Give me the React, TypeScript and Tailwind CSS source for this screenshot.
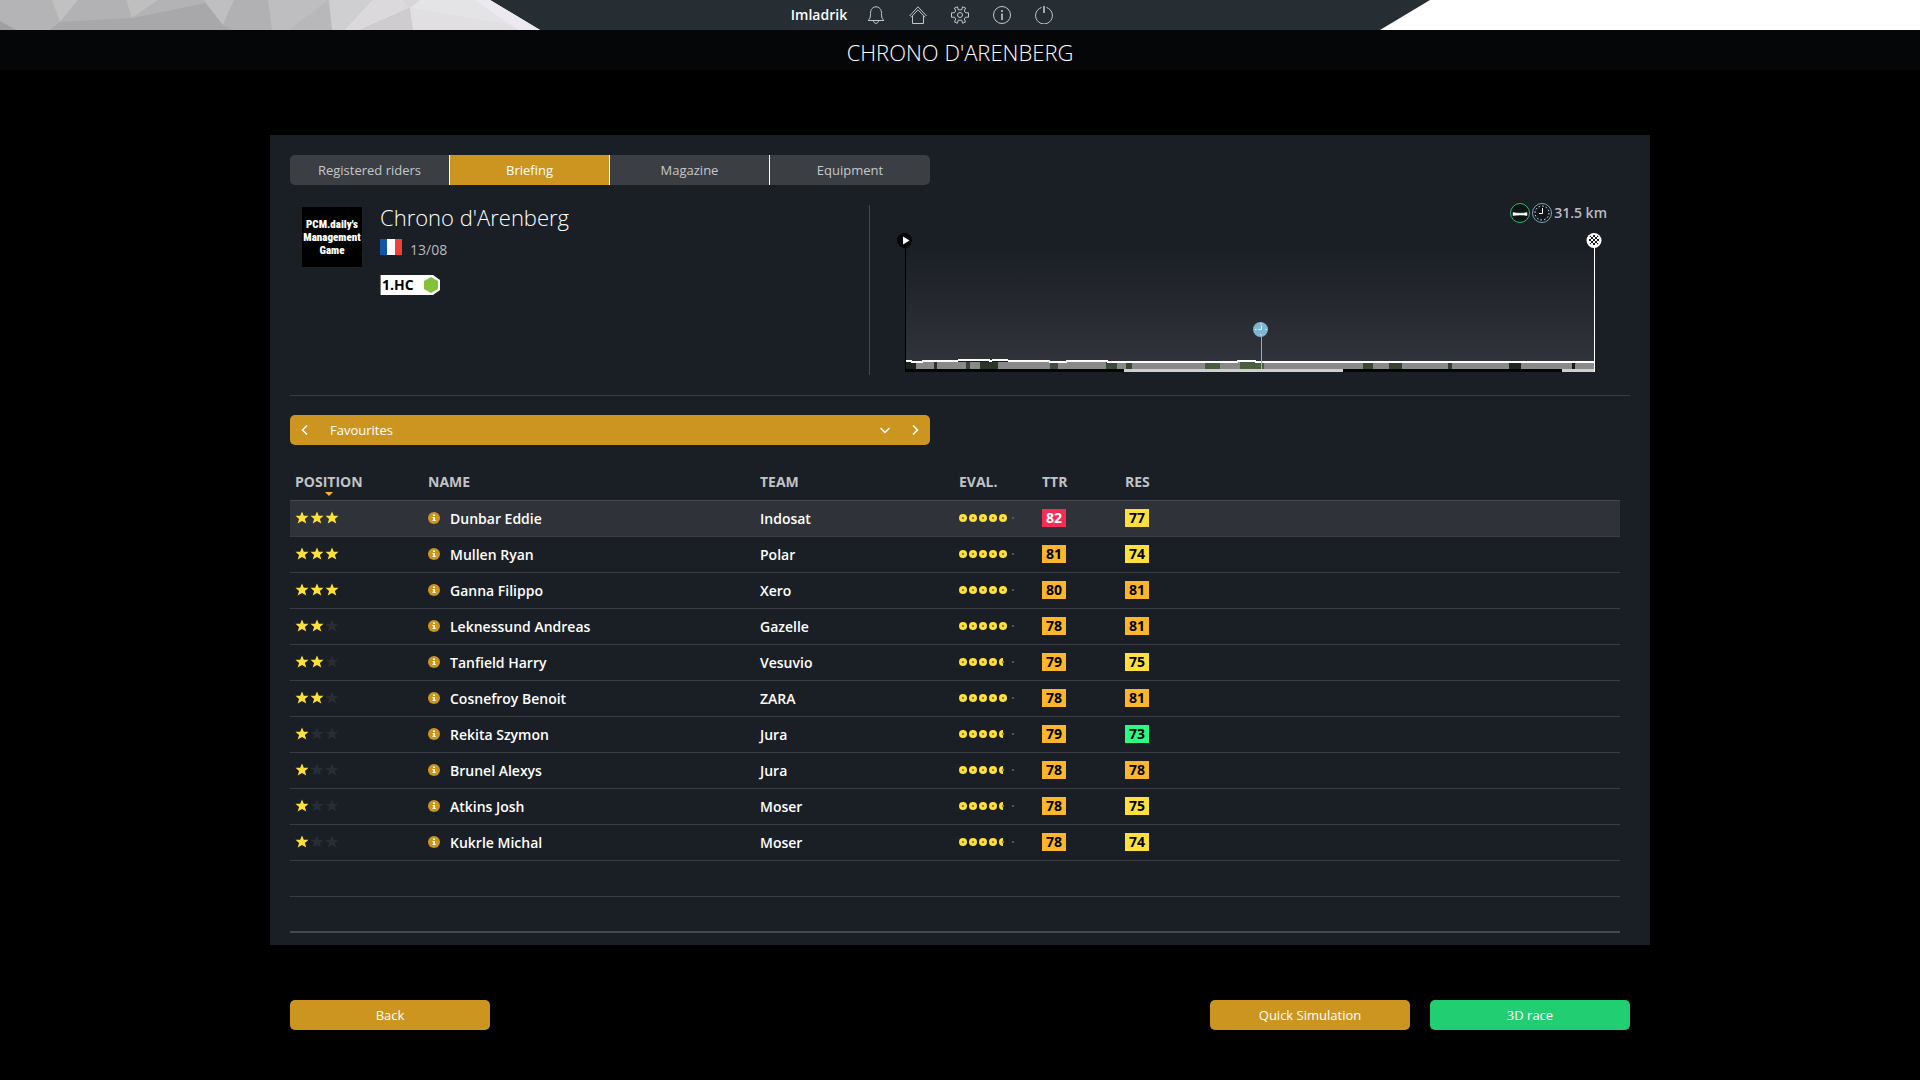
import type { ReactNode } from "react"

const TABS = ["Registered riders", "Briefing", "Magazine", "Equipment"]

const RIDERS = [
  { name: "Dunbar Eddie", team: "Indosat", stars: 3, rating: 5, ttr: 82, res: 77 },
  { name: "Mullen Ryan", team: "Polar", stars: 3, rating: 5, ttr: 81, res: 74 },
  { name: "Ganna Filippo", team: "Xero", stars: 3, rating: 5, ttr: 80, res: 81 },
  { name: "Leknessund Andreas", team: "Gazelle", stars: 2, rating: 5, ttr: 78, res: 81 },
  { name: "Tanfield Harry", team: "Vesuvio", stars: 2, rating: 4.5, ttr: 79, res: 75 },
  { name: "Cosnefroy Benoit", team: "ZARA", stars: 2, rating: 5, ttr: 78, res: 81 },
  { name: "Rekita Szymon", team: "Jura", stars: 1, rating: 4.5, ttr: 79, res: 73 },
  { name: "Brunel Alexys", team: "Jura", stars: 1, rating: 4.5, ttr: 78, res: 78 },
  { name: "Atkins Josh", team: "Moser", stars: 1, rating: 4.5, ttr: 78, res: 75 },
  { name: "Kukrle Michal", team: "Moser", stars: 1, rating: 4.5, ttr: 78, res: 74 },
]

// x, width, colour of each wooded stretch
const WOODS: [number, number, string][] = [
  [9, 10, "#1c221c"], [37, 3, "#2a302a"], [69, 4, "#364233"], [83, 18, "#2c352a"],
  [153, 8, "#414b3d"], [209, 11, "#3c4a38"], [229, 6, "#3a4735"], [308, 15, "#485c40"],
  [343, 24, "#4a5f41"], [466, 10, "#3a4735"], [492, 13, "#37432f"], [551, 4, "#343e30"],
  [612, 12, "#20261f"], [675, 3, "#161a16"],
]

function scoreColor(v: number) {
  if (v >= 82) return "bg-[#f72c55] text-white"
  if (v >= 78) return "bg-[#fdb52b] text-black"
  if (v >= 74) return "bg-[#fde03c] text-black"
  return "bg-[#2bfa85] text-black"
}

function Score({ value }: { value: number }) {
  return (
    <span className={`flex h-[18px] w-6 items-center justify-center text-sm font-bold ${scoreColor(value)}`}>
      {value}
    </span>
  )
}

function Stars({ count }: { count: number }) {
  return (
    <svg width="45" height="14" viewBox="0 0 45 14" className="block">
      {[0, 1, 2].map((i) => (
        <path
          key={i}
          transform={`translate(${i * 15} 0)`}
          d="M7 0.5 8.8 4.8H13.5L9.9 7.9 11.3 12.6 7 9.9 2.700 12.6 4.1 7.9 0.5 4.8H5.2Z"
          fill={i < count ? "#fde03c" : "#282c33"}
        />
      ))}
    </svg>
  )
}

function Rating({ value }: { value: number }) {
  return (
    <svg width="56" height="8" viewBox="0 0 56 8" className="block">
      {[0, 1, 2, 3, 4].map((i) => {
        const cx = 4 + i * 10
        return (
          <g key={i}>
            {value >= i + 1 ? (
              <circle cx={cx} cy="4" r="4" fill="#fde03c" />
            ) : (
              <path d={`M${cx} 0A4 4 0 0 0 ${cx} 8Z`} fill="#fde03c" />
            )}
            <circle cx={cx} cy="4" r="1.2" fill="#9c8526" />
          </g>
        )
      })}
      <rect x="53" y="3" width="2" height="2" fill="#5a5b3c" />
    </svg>
  )
}

function InfoDot() {
  return (
    <svg width="12" height="12" viewBox="0 0 12 12" className="block">
      <circle cx="6" cy="6" r="6" fill="#cb951f" />
      <path d="M5 2.5H7V4H5ZM4.5 5H7V8H7.8V9H4.5V8H5.3V6H4.5Z" fill="#fff" />
    </svg>
  )
}

function NavIcon({ label, children }: { label: string; children: ReactNode }) {
  return (
    <button aria-label={label} className="text-[#c3c8cc]">
      <svg width="18" height="18" viewBox="0 0 18 18" fill="none" stroke="currentColor" className="block">
        {children}
      </svg>
    </button>
  )
}

function Chevron({ d }: { d: string }) {
  return (
    <svg width="10" height="10" viewBox="0 0 10 10" fill="none" stroke="#fff" strokeWidth="1.5" className="block">
      <path d={d} />
    </svg>
  )
}

function TopBar() {
  return (
    <header className="flex h-[30px] justify-between bg-[#262d33]">
      <svg width="540" height="30" viewBox="0 0 540 30" className="shrink-0">
        <path d="M0 0H490L540 30H0Z" fill="#b4b3b5" />
        <path d="M52 0H78L60 22Z" fill="#c2c1c2" />
        <path d="M126 0H158L132 18Z" fill="#c0bfc0" />
        <path d="M78 0H126L132 18 60 22Z" fill="#b2b1b3" />
        <path d="M50 30 60 22 132 18 205 3 223 25 233 30Z" fill="#a8a7a9" />
        <path d="M158 0H204L205 3 132 18Z" fill="#b3b2b4" />
        <path d="M0 21 16 30H0Z" fill="#9f9ea0" />
        <path d="M204 0H234L223 25Z" fill="#bfbec0" />
        <path d="M234 0H268L272 30H233L223 25Z" fill="#b1b0b2" />
        <path d="M268 0H329L332 30H272Z" fill="#bebdbf" />
        <path d="M328 0 332 30H289Z" fill="#b8b7b9" />
        <path d="M329 0H372L344 30H332Z" fill="#cfced0" />
        <path d="M372 0H403L410 8 360 30H344Z" fill="#dbd9dc" />
        <path d="M410 8 413 30H360Z" fill="#cecccf" />
        <path d="M403 0H490L540 30H413L410 8Z" fill="#e4e3e5" />
        <path d="M410 8 540 30H413Z" fill="#e1dfe2" />
        <path d="M475 0H490L540 30H518Z" fill="#eceaf0" />
        <path d="M403 0H420L410 8Z" fill="#d6d5d7" />
      </svg>
      <nav className="flex items-center gap-6 pr-[76px]">
        <span className="-mr-1 text-sm font-semibold text-white">Imladrik</span>
        <NavIcon label="Notifications">
          <path d="M1 14.5C3.2 13 3.5 11 3.5 7.500 3.5 3 6 0.8 9 0.8S14.5 3 14.5 7.5C14.5 11 14.8 13 17 14.5ZM6.500 14.8C6.800 18.200 11.200 18.200 11.500 14.8" />
        </NavIcon>
        <NavIcon label="Home">
          <path d="M0.500 10 9 0.8 17.500 10M2 11.300 9 3.800 16 11.300M3.500 10V17.500H14.500V10" />
        </NavIcon>
        <NavIcon label="Settings">
          <path d="M7.200 3.800 6.500 0.8 3.500 2 4.700 5 3.400 6.800H0.5V11.200H3.400L4.700 13 3.500 16 6.500 17.200 7.200 14.200H10.800L11.500 17.200 14.500 16 13.300 13 14.600 11.200H17.500V6.800H14.600L13.300 5 14.500 2 11.500 0.8 10.800 3.800Z" strokeLinejoin="round" />
          <circle cx="9" cy="9" r="2.5" />
        </NavIcon>
        <NavIcon label="Information">
          <circle cx="9" cy="9" r="8.5" />
          <path d="M9 7.5V14M9 4V6" strokeWidth="1.6" />
        </NavIcon>
        <NavIcon label="Quit">
          <path d="M6.5 1.5A8.4 8.4 0 1 0 11.5 1.5" />
          <path d="M9 0V7" strokeWidth="1.6" />
        </NavIcon>
      </nav>
      <svg width="540" height="30" viewBox="0 0 540 30" className="shrink-0">
        <path d="M50 0H540V30H0Z" fill="#fff" />
      </svg>
    </header>
  )
}

function StageProfile() {
  return (
    <svg viewBox="0 0 706 144" className="block w-full">
      <defs>
        <linearGradient id="sky" x1="0" y1="0" x2="0" y2="1">
          <stop offset="0" stopColor="#1a1e25" />
          <stop offset="1" stopColor="#303339" />
        </linearGradient>
        <clipPath id="flag">
          <circle cx="697" cy="9" r="5.5" />
        </clipPath>
      </defs>
      <rect x="9" y="16" width="689" height="114" fill="url(#sky)" />
      <rect x="9" y="131" width="689" height="7" fill="#89898a" />
      {WOODS.map(([x, w, color]) => (
        <rect key={x} x={x} y="131" width={w} height="7" fill={color} />
      ))}
      <path
        d="M9 130H14L15 131H25L26 130H55L67 129H92L93 130 97 129H106L116 130H152L153 131H169L170 130H210L211 131H340L341 130H358L359 131H698"
        fill="none"
        stroke="#fff"
        strokeWidth="2"
        shapeRendering="crispEdges"
      />

      {/* distance bar */}
      <rect x="8" y="138" width="690" height="3" fill="#050608" />
      <rect x="227" y="138" width="219" height="3" fill="#cfcfd0" />
      <rect x="665" y="138" width="33" height="3" fill="#cfcfd0" />

      {/* start */}
      <rect x="8" y="14" width="1" height="127" fill="#000" />
      <circle cx="7.5" cy="9.5" r="7.5" fill="#050608" />
      <path d="M6 5.5 12.5 9.5 6 13.5Z" fill="#fff" />

      {/* time check */}
      <rect x="364" y="100" width="1" height="38" fill="#7fb5d2" />
      <circle cx="363.5" cy="98.5" r="7.5" fill="#7fb5d2" />
      <path d="M364.5 94.5V98.5H361.5M364 92V93.5M364 103V104.5M358 98.5H359.5M368.5 98.5H370" fill="none" stroke="#e4f1f7" />

      {/* finish */}
      <rect x="697" y="14" width="1" height="127" fill="#fff" />
      <circle cx="697" cy="9.5" r="7.5" fill="#fff" />
      <g fill="#17191c" clipPath="url(#flag)">
        {[0, 1, 2, 3, 4].map((row) =>
          [0, 1, 2].map((col) => (
            <rect key={`${row}-${col}`} x={692 + col * 4 + (row % 2) * 2} y={4 + row * 2} width="2" height="2" />
          ))
        )}
      </g>
    </svg>
  )
}

function RaceSummary() {
  return (
    <section className="flex h-[170px]">
      <div className="flex w-[580px] shrink-0 gap-[18px] border-r border-[#45484e] pl-3">
        <div className="mt-[2px] flex size-[60px] shrink-0 flex-col items-center justify-center bg-black text-center font-['Roboto_Condensed','Liberation_Sans_Narrow','Liberation_Sans',sans-serif] text-[11px] leading-[13px] font-black text-white">
          <span>PCM.daily's</span>
          <span>Management</span>
          <span>Game</span>
        </div>
        <div>
          <h2 className="text-[22px] leading-6 font-light text-white">Chrono d'Arenberg</h2>
          <div className="mt-2 flex h-6 items-center gap-2">
            <svg width="22" height="16" viewBox="0 0 22 16" className="mb-1">
              <path d="M0 0H7V16H0Z" fill="#1355a5" />
              <path d="M7 0H15V16H7Z" fill="#fff" />
              <path d="M15 0H22V16H15Z" fill="#ef4135" />
            </svg>
            <span className="pt-[2px] text-sm text-[#b9bcc0]">13/08</span>
          </div>
          <div className="relative mt-[14px] h-5 w-[60px]">
            <svg width="60" height="20" viewBox="0 0 60 20" className="absolute inset-0">
              <path d="M0 0H53L60 5V15L53 20H0Z" fill="#fff" />
              <path d="M0 0H1V20H0Z" fill="#777" />
              <path d="M51 2 58 6V14L51 18 44 14V6Z" fill="#84c13b" />
            </svg>
            <span className="relative block pl-[2px] text-sm leading-5 font-bold text-black">1.HC</span>
          </div>
        </div>
      </div>
      <div className="min-w-0 flex-1 pl-[27px]">
        <div className="flex h-4 items-center justify-end gap-[2px] pr-[23px]">
          <svg width="42" height="20" viewBox="0 0 42 20" className="shrink-0">
            <circle cx="10" cy="10" r="9.5" fill="#0b1512" stroke="#2bb673" />
            <path d="M3 9.5C7 10.5 13 10.5 17 9.5V12.5C13 11.8 7 11.8 3 12.5Z" fill="#fff" stroke="#fff" strokeWidth="0.5" />
            <circle cx="32" cy="10" r="9.5" fill="#11171b" stroke="#7fa6bd" />
            <circle cx="32" cy="10" r="7" fill="none" stroke="#fff" strokeDasharray="1.5 2.165" />
            <path d="M32.5 5V10.5H29" fill="none" stroke="#fff" />
          </svg>
          <span className="text-sm font-semibold text-[#b9bcc0]">31.5 km</span>
        </div>
        <div className="mt-[10px] pr-[27px]">
          <StageProfile />
        </div>
      </div>
    </section>
  )
}

function RiderTable() {
  return (
    <table className="mr-[10px] w-[calc(100%-10px)] table-fixed border-collapse text-left text-sm">
      <colgroup>
        <col className="w-[133px]" />
        <col className="w-[332px]" />
        <col className="w-[199px]" />
        <col className="w-[83px]" />
        <col className="w-[83px]" />
        <col />
      </colgroup>
      <thead>
        <tr className="h-[55px] border-b border-[#45484e] text-[#c0c3c7]">
          <th className="pt-5 pl-[5px] font-bold">
            <span className="relative inline-block">
              POSITION
              <svg width="8" height="4" viewBox="0 0 8 4" className="absolute top-full left-1/2 -translate-x-1/2">
                <path d="M0 0H8L4 4Z" fill="#fdb52b" />
              </svg>
            </span>
          </th>
          <th className="pt-5 pl-[5px] font-bold">NAME</th>
          <th className="pt-5 pl-[5px] font-bold">TEAM</th>
          <th className="pt-5 pl-[5px] font-bold">EVAL.</th>
          <th className="pt-5 pl-[5px] font-bold">TTR</th>
          <th className="pt-5 pl-[5px] font-bold">RES</th>
        </tr>
      </thead>
      <tbody className="font-semibold text-white">
        {RIDERS.map((r, i) => (
          <tr key={r.name} className={`h-9 border-b border-[#3a3d43] ${i === 0 ? "bg-[#2f3238]" : ""}`}>
            <td className="pl-[5px]"><Stars count={r.stars} /></td>
            <td className="pl-[5px]">
              <div className="flex items-center gap-[10px]">
                <InfoDot />
                <span className="pt-[2px]">{r.name}</span>
              </div>
            </td>
            <td className="pt-[2px] pl-[5px]">{r.team}</td>
            <td className="pl-[5px]"><Rating value={r.rating} /></td>
            <td className="pl-[5px]"><Score value={r.ttr} /></td>
            <td className="pl-[5px]"><Score value={r.res} /></td>
          </tr>
        ))}
        <tr className="h-9 border-b border-[#3a3d43]"><td colSpan={6} /></tr>
        <tr className="h-9 border-b-2 border-[#45484e]"><td colSpan={6} /></tr>
      </tbody>
    </table>
  )
}

export default function App() {
  return (
    <div className="min-h-screen bg-black font-['Open_Sans',sans-serif]">
      <TopBar />
      <h1 className="flex h-10 items-center justify-center bg-[#050608] pt-[5px] text-[22px] font-light text-white">
        CHRONO D'ARENBERG
      </h1>

      <main className="mx-auto mt-[65px] w-full max-w-[1380px] bg-[#1a1e25] px-5 pt-5 pb-3">
        <div role="tablist" className="grid h-[30px] w-[640px] grid-cols-4 divide-x divide-white overflow-hidden rounded-[5px]">
          {TABS.map((t) => (
            <button
              key={t}
              role="tab"
              aria-selected={t === "Briefing"}
              className={`pt-[2px] text-[13px] ${t === "Briefing" ? "bg-[#cb951f] text-white" : "bg-[#3b3e42] text-[#c5c8cb]"}`}
            >
              {t}
            </button>
          ))}
        </div>

        <div className="border-b border-[#3a3d43] pt-5 pb-5">
          <RaceSummary />
        </div>

        <div className="mt-[19px] flex h-[30px] w-[640px] items-center rounded-[5px] bg-[#cb951f] text-[13px] text-white">
          <button aria-label="Previous list" className="flex w-[30px] justify-center">
            <Chevron d="M7 0.5 2.5 5 7 9.5" />
          </button>
          <label className="relative flex flex-1 items-center">
            <select aria-label="List" className="w-full appearance-none bg-transparent pt-[2px] pl-[10px] outline-none">
              <option>Favourites</option>
            </select>
            <span className="pointer-events-none absolute right-[10px]">
              <Chevron d="M0.5 3 5 7.5 9.5 3" />
            </span>
          </label>
          <button aria-label="Next list" className="flex w-[30px] justify-center">
            <Chevron d="M3 0.5 7.5 5 3 9.5" />
          </button>
        </div>

        <RiderTable />
      </main>

      <footer className="mx-auto mt-[55px] flex w-full max-w-[1380px] gap-5 px-5 pb-[50px] text-[13px] text-white">
        <button className="mr-auto h-[30px] w-[200px] rounded-[5px] bg-[#cb951f] pt-[2px]">Back</button>
        <button className="h-[30px] w-[200px] rounded-[5px] bg-[#cb951f] pt-[2px]">Quick Simulation</button>
        <button className="h-[30px] w-[200px] rounded-[5px] bg-[#22ce72] pt-[2px]">3D race</button>
      </footer>
    </div>
  )
}
